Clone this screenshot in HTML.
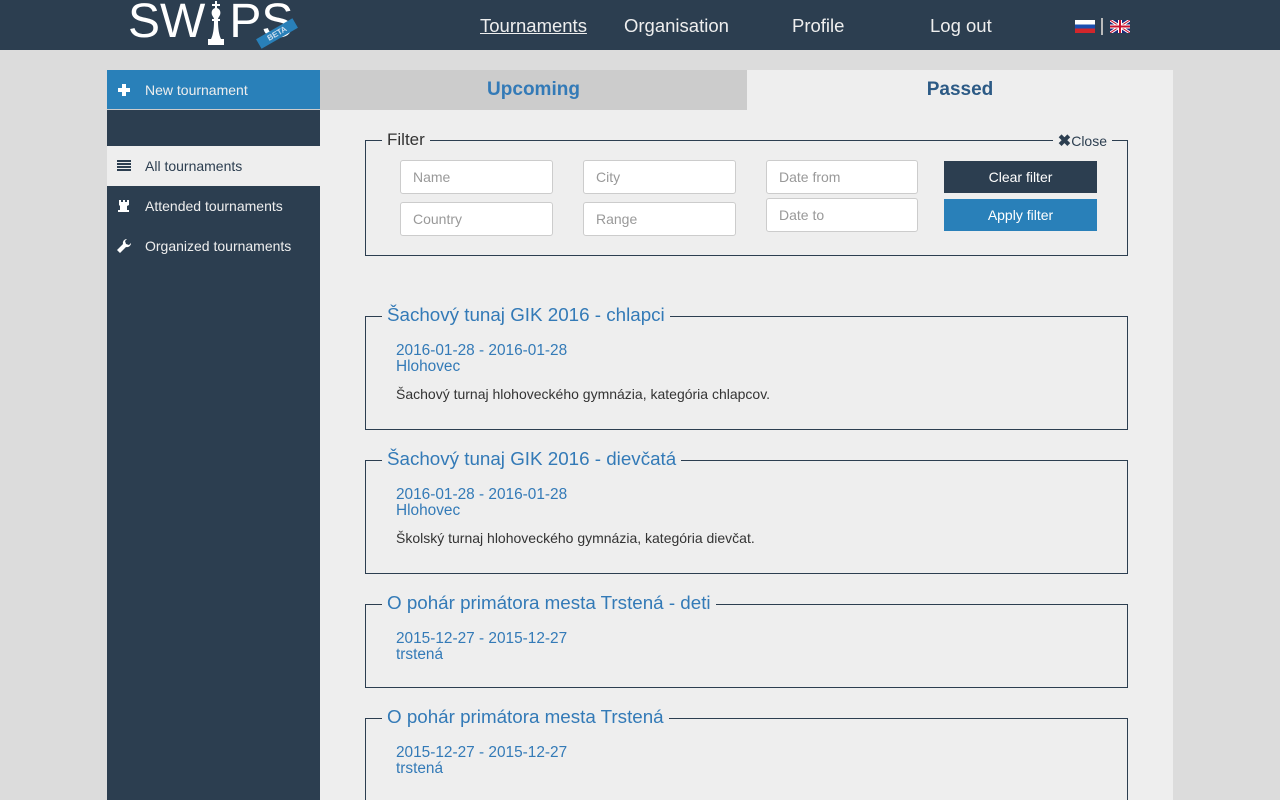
<!DOCTYPE html>
<html><head><meta charset="utf-8"><style>
*{box-sizing:border-box;margin:0;padding:0}
html,body{width:1280px;height:800px;overflow:hidden}
body{background:#dcdcdc;font-family:"Liberation Sans",sans-serif;position:relative}
.hdr{position:absolute;left:0;top:0;width:1280px;height:50px;background:#2c3e50}
.nav{position:absolute;top:15px;color:#eee;font-size:18.5px}
.side{position:absolute;left:107px;top:70px;width:213px;height:730px;background:#2c3e50}
.si{position:absolute;left:0;width:213px;height:40px;color:#eee;font-size:14px;line-height:40px;padding-left:38px}
.ic{position:absolute;left:9px;top:12px;width:16px;height:16px}
.main{position:absolute;left:320px;top:70px;width:853px;height:730px;background:#eee;overflow:hidden}
.tab{position:absolute;top:0;height:40px;line-height:40px;text-align:center;font-weight:bold;font-size:19px}
.box{position:absolute;left:45px;width:763px;border:1px solid #2c3e50}
.lg{position:absolute;left:16px;top:-13px;padding:0 5px;font-size:18.8px;line-height:22px;color:#337ab7;background:#eee;white-space:nowrap}
.in{position:absolute;width:153px;height:34px;border:1px solid #ccc;border-radius:3px;background:#fff;color:#999;font-size:14px;line-height:32px;padding-left:12px}
.btn{position:absolute;left:578px;width:153px;height:32px;color:#fff;font-size:14px;line-height:32px;text-align:center}
.d{position:absolute;left:30px;color:#337ab7;font-size:15.4px;line-height:16px}
.ds{position:absolute;left:30px;color:#333;font-size:14px}
</style></head><body>
<div class="hdr">
<div style="position:absolute;left:128px;top:-3px;color:#fff;font-size:48px;line-height:50px">SW<span style="display:inline-block;width:24px"></span>PS</div>
<svg style="position:absolute;left:203px;top:1px" width="26" height="44" viewBox="0 0 24 44"><path d="M11 0h2v3h3v2h-3v2c3 1 4 4 3 7-1 2-2 3-2 4h2v2h-2c0 8 1 14 3 18h3v6H4v-6h3c2-4 3-10 3-18H8v-2h2c0-1-1-2-2-4-1-3 0-6 3-7V5H8V3h3z" fill="#fff"/></svg>
<div style="position:absolute;left:256px;top:28px;width:42px;height:11px;background:#2980b9;transform:rotate(-30deg);color:#cde;font-size:8px;line-height:11px;text-align:center;font-weight:bold">BETA</div>
<div class="nav" style="left:480px;text-decoration:underline">Tournaments</div>
<div class="nav" style="left:624px">Organisation</div>
<div class="nav" style="left:792px">Profile</div>
<div class="nav" style="left:930px">Log out</div>
<div style="position:absolute;left:1075px;top:20px;width:20px;height:13px;background:linear-gradient(#fff 0 33%,#1b4fb0 33% 66%,#d3262b 66%)"></div>
<div style="position:absolute;left:1101px;top:18px;width:2px;height:17px;background:#bbb"></div>
<svg style="position:absolute;left:1110px;top:20px" width="20" height="13" viewBox="0 0 20 13"><rect width="20" height="13" fill="#1a2a7a"/><path d="M0 0L20 13M20 0L0 13" stroke="#fff" stroke-width="3"/><path d="M0 0L20 13M20 0L0 13" stroke="#c8102e" stroke-width="1"/><path d="M10 0V13M0 6.5H20" stroke="#fff" stroke-width="4"/><path d="M10 0V13M0 6.5H20" stroke="#c8102e" stroke-width="2"/></svg>
</div>
<div class="side">
<div class="si" style="top:0;background:#2980b9;border-bottom:1px solid #ccc"><svg class="ic" viewBox="0 0 16 16"><path d="M6 2h4v4h4v4h-4v4H6v-4H2V6h4z" fill="#fff"/></svg>New tournament</div>
<div class="si" style="top:76px;background:#eee;color:#2c3e50"><svg class="ic" viewBox="0 0 16 16"><path d="M1 2h14v2H1zM1 5h14v2H1zM1 8h14v2H1zM1 11h14v2H1z" fill="#2c3e50"/></svg>All tournaments</div>
<div class="si" style="top:116px"><svg class="ic" viewBox="0 0 16 16"><path d="M3 2h2v2h2V2h2v2h2V2h2v5l-2 1v4h2v2H2v-2h2V8L3 7z" fill="#fff"/></svg>Attended tournaments</div>
<div class="si" style="top:156px"><svg class="ic" viewBox="0 0 16 16"><path d="M11 1a4 4 0 0 0-4 5L1 12l3 3 6-6a4 4 0 0 0 5-4l-2 2-3-1-1-3 2-2z" fill="#fff"/></svg>Organized tournaments</div>
</div>
<div class="main">
<div class="tab" style="left:0;width:427px;background:#ccc;color:#337ab7">Upcoming</div>
<div class="tab" style="left:427px;width:426px;color:#2c5a85">Passed</div>
<div class="box" style="top:70px;height:116px"><div class="lg" style="color:#333;font-size:17px;top:-12px">Filter</div>
<div style="position:absolute;right:15px;top:-9px;background:#eee;padding:0 5px;color:#2c3e50;font-size:14px;line-height:18px"><b style="font-size:16px">✖</b>Close</div>
<div class="in" style="left:34px;top:19px">Name</div>
<div class="in" style="left:217px;top:19px">City</div>
<div class="in" style="left:400px;top:19px;width:152px">Date from</div>
<div class="in" style="left:34px;top:61px">Country</div>
<div class="in" style="left:217px;top:61px">Range</div>
<div class="in" style="left:400px;top:57px;width:152px">Date to</div>
<div class="btn" style="top:20px;background:#2c3e50">Clear filter</div>
<div class="btn" style="top:58px;background:#2980b9">Apply filter</div>
</div>
<div class="box" style="top:246px;height:114px"><div class="lg">Šachový tunaj GIK 2016 - chlapci</div>
<div class="d" style="top:26px">2016-01-28 - 2016-01-28<br>Hlohovec</div>
<div class="ds" style="top:69px">Šachový turnaj hlohoveckého gymnázia, kategória chlapcov.</div></div>
<div class="box" style="top:390px;height:114px"><div class="lg">Šachový tunaj GIK 2016 - dievčatá</div>
<div class="d" style="top:26px">2016-01-28 - 2016-01-28<br>Hlohovec</div>
<div class="ds" style="top:69px">Školský turnaj hlohoveckého gymnázia, kategória dievčat.</div></div>
<div class="box" style="top:534px;height:84px"><div class="lg">O pohár primátora mesta Trstená - deti</div>
<div class="d" style="top:26px">2015-12-27 - 2015-12-27<br>trstená</div></div>
<div class="box" style="top:648px;height:120px"><div class="lg">O pohár primátora mesta Trstená</div>
<div class="d" style="top:26px">2015-12-27 - 2015-12-27<br>trstená</div></div>
</div>
</body></html>
